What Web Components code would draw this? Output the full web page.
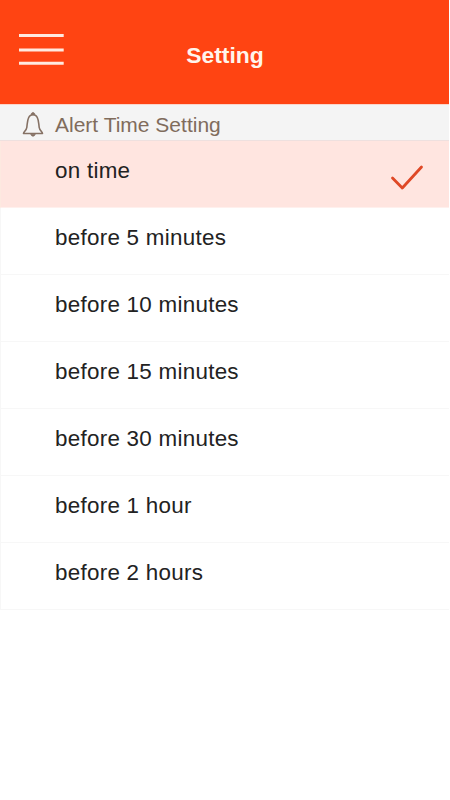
<!DOCTYPE html>
<html lang="en"><head><meta charset="utf-8"><title>Setting</title>
<style>html,body{margin:0;background:#fff}body{height:800px;overflow:hidden}</style></head>
<body>
<settings-page>
<app-header>Setting</app-header>
<section-title>Alert Time Setting</section-title>
<time-option selected>on time</time-option>
<time-option>before 5 minutes</time-option>
<time-option>before 10 minutes</time-option>
<time-option>before 15 minutes</time-option>
<time-option>before 30 minutes</time-option>
<time-option>before 1 hour</time-option>
<time-option>before 2 hours</time-option>
</settings-page>
<script>
const define=(name,html)=>customElements.define(name,class extends HTMLElement{
constructor(){super();this.attachShadow({mode:'open'}).innerHTML=html}});
define('settings-page',`<style>:host{display:flex;flex-direction:column;width:449px;height:800px;background:#fff;font-family:"Liberation Sans",Arial,sans-serif}</style><slot></slot>`);
define('app-header',`<style>:host{display:grid;grid-template-columns:82px 1fr 82px;height:104px;box-sizing:border-box;background:#ff4412;color:#fff5ec}
svg{display:block}h1{margin:41px 0 0;padding-left:1px;text-align:center;font-size:22.9px;line-height:28px;font-weight:700}</style>
<svg width="82" height="104" viewBox="0 0 82 104" fill="none" stroke="#ffeadf" stroke-width="3"><path d="M19 35.5H63.7M19 50H63.7M19 63.2H63.7"/></svg><h1><slot></slot></h1>`);
define('section-title',`<style>:host{display:flex;height:37px;box-sizing:border-box;background:#f4f4f4;border-top:1px solid #fbd5ca;border-bottom:1px solid #eee0df;color:#806c5c;font-size:21px;line-height:39px}
svg{display:block;width:55px;flex:none}</style>
<svg width="55" height="35" viewBox="0 0 55 35" fill="none" stroke="#857164" stroke-width="1.6" stroke-linejoin="round"><path d="M23.5 28.5H42.5C42.4 26.8 39.6 25.5 39.2 22.5C38.6 18 38.8 15.5 37.3 12.5C36.3 10.5 34.8 9.8 33 9.8S29.7 10.5 28.7 12.5C27.2 15.5 27.4 18 26.8 22.5C26.4 25.5 23.6 26.8 23.5 28.5Z"/><path d="M31.2 9.7C31.2 6.7 34.8 6.7 34.8 9.7ZM30.8 29.2C31.2 31.8 34.8 31.8 35.2 29.2Z" fill="#857164" stroke-width=".8"/></svg><slot></slot>`);
define('time-option',`<style>:host{display:flex;justify-content:space-between;height:67px;box-sizing:border-box;padding-left:54px;border-bottom:1px solid #f7f7f7;border-left:1px solid #f7f7f7;color:#222;font-size:22.4px;line-height:60px;letter-spacing:.27px}
:host([selected]){background:#ffe5e0;border-left-color:#fde9e0;border-bottom-color:#fff0ed}svg{display:none}:host([selected]) svg{display:block}</style><slot></slot>
<svg width="80" height="66" viewBox="0 0 80 66" fill="none" stroke="#df4826" stroke-width="2.8" stroke-linecap="round" stroke-linejoin="round"><path d="M23.5 37L33.3 47L52.5 26"/></svg>`);
</script></body></html>
